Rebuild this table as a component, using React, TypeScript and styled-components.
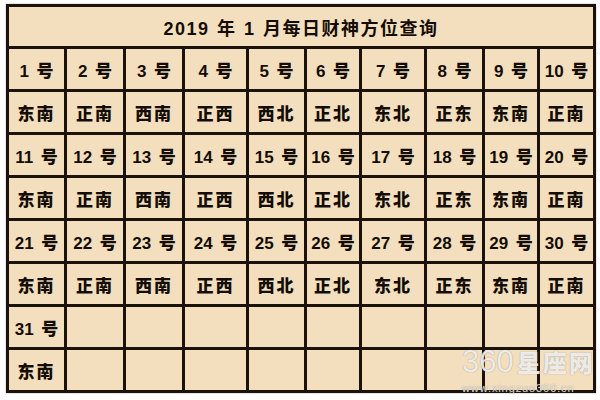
import React from "react";
import styled, { createGlobalStyle } from "styled-components";

const GlobalStyle = createGlobalStyle`
  html, body {
    margin: 0;
    padding: 0;
    background: #ffffff;
  }
`;

const Page = styled.div`
  width: 600px;
  height: 400px;
  padding: 4px 0 0 6px;
  box-sizing: border-box;
  position: relative;
  font-family: "Liberation Sans", "Noto Sans CJK SC", sans-serif;
`;

const Table = styled.div`
  width: 590px;
  display: grid;
  grid-template-columns: 55px 56px 56px 61px 55px 52px 62px 55px 52px 53px;
  grid-template-rows: 39px repeat(8, 40px);
  gap: 3px;
  padding: 3px;
  box-sizing: border-box;
  background: #1b130b;
  box-shadow: 0 0 1px rgba(27, 19, 11, 0.6);
`;

const TitleCell = styled.div`
  grid-column: 1 / -1;
  background: #f3dfbe;
  display: flex;
  align-items: center;
  justify-content: center;
  font-size: 18px;
  font-weight: 700;
  letter-spacing: 1.5px;
  word-spacing: 1px;
  color: #140d06;
  font-family: "Liberation Sans", "Noto Sans CJK SC", sans-serif;
`;

const Cell = styled.div<{ $dir?: boolean }>`
  background: #f3dfbe;
  display: flex;
  align-items: center;
  justify-content: center;
  font-size: 17px;
  font-weight: 900;
  color: #140d06;
  letter-spacing: ${({ $dir }) => ($dir ? "2px" : "0")};
  word-spacing: 3px;
  white-space: pre;
  font-family: "Liberation Sans", "Noto Sans CJK SC", sans-serif;
`;

const Watermark = styled.div`
  position: absolute;
  left: 462px;
  top: 346px;
  width: 136px;
  color: rgba(255, 255, 255, 0.85);
  text-shadow: 0 0 1px rgba(110, 100, 90, 0.8);
  pointer-events: none;
`;

const MarkLine = styled.div`
  display: flex;
  align-items: baseline;
  line-height: 1;
`;

const MarkNum = styled.span`
  font-family: "Liberation Sans", sans-serif;
  font-size: 31px;
  font-weight: 400;
`;

const MarkName = styled.span`
  font-family: "Noto Sans CJK SC", sans-serif;
  font-size: 24px;
  font-weight: 900;
  letter-spacing: 2px;
  margin-left: 3px;
`;

const MarkUrl = styled.div`
  font-family: "Liberation Sans", sans-serif;
  font-size: 11px;
  letter-spacing: 0.9px;
  margin-top: 5px;
  color: rgba(255, 255, 255, 0.75);
`;

const directions = [
  "东南", "正南", "西南", "正西", "西北", "正北", "东北", "正东", "东南", "正南",
];

const App: React.FC = () => {
  const rows: React.ReactNode[] = [];
  for (let block = 0; block < 3; block++) {
    for (let i = 0; i < 10; i++) {
      rows.push(<Cell key={`n${block}-${i}`}>{block * 10 + i + 1} 号</Cell>);
    }
    for (let i = 0; i < 10; i++) {
      rows.push(
        <Cell key={`d${block}-${i}`} $dir>
          {directions[i]}
        </Cell>
      );
    }
  }

  return (
    <>
      <GlobalStyle />
      <Page>
        <Table>
          <TitleCell>2019 年 1 月每日财神方位查询</TitleCell>
          {rows}
          <Cell>31 号</Cell>
          {Array.from({ length: 9 }).map((_, i) => (
            <Cell key={`e1-${i}`} />
          ))}
          <Cell $dir>东南</Cell>
          {Array.from({ length: 9 }).map((_, i) => (
            <Cell key={`e2-${i}`} />
          ))}
        </Table>
        <Watermark>
          <MarkLine>
            <MarkNum>360</MarkNum>
            <MarkName>星座网</MarkName>
          </MarkLine>
          <MarkUrl>www.xingzuo360.cn</MarkUrl>
        </Watermark>
      </Page>
    </>
  );
};

export default App;
